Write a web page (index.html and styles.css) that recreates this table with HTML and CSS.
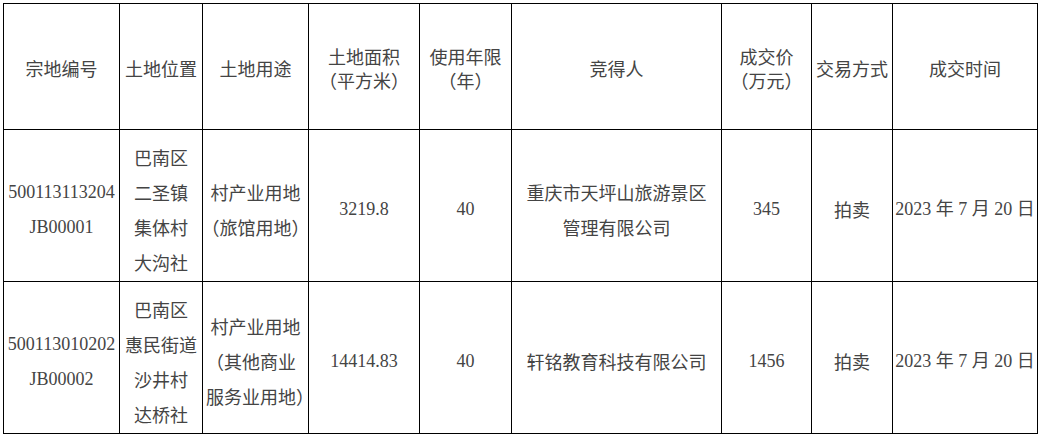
FILE: index.html
```html
<!DOCTYPE html>
<html lang="zh-CN">
<head>
<meta charset="utf-8">
<title>土地成交</title>
<link rel="stylesheet" href="styles.css">
</head>
<body>
<div class="page">
<table class="land">
  <colgroup>
    <col class="c1"><col class="c2"><col class="c3"><col class="c4"><col class="c5"><col class="c6"><col class="c7"><col class="c8"><col class="c9">
  </colgroup>
  <thead>
    <tr class="head">
      <th>宗地编号</th>
      <th>土地位置</th>
      <th>土地用途</th>
      <th>土地面积<br>（平方米）</th>
      <th>使用年限<br>（年）</th>
      <th>竞得人</th>
      <th>成交价<br>（万元）</th>
      <th>交易方式</th>
      <th>成交时间</th>
    </tr>
  </thead>
  <tbody>
    <tr class="row">
      <td class="num">500113113204<br>JB00001</td>
      <td>巴南区<br>二圣镇<br>集体村<br>大沟社</td>
      <td>村产业用地<br>（旅馆用地）</td>
      <td class="num">3219.8</td>
      <td class="num">40</td>
      <td>重庆市天坪山旅游景区<br>管理有限公司</td>
      <td class="num">345</td>
      <td>拍卖</td>
      <td class="date">2023 年 7 月 20 日</td>
    </tr>
    <tr class="row">
      <td class="num">500113010202<br>JB00002</td>
      <td>巴南区<br>惠民街道<br>沙井村<br>达桥社</td>
      <td>村产业用地<br>（其他商业<br>服务业用地）</td>
      <td class="num">14414.83</td>
      <td class="num">40</td>
      <td>轩铭教育科技有限公司</td>
      <td class="num">1456</td>
      <td>拍卖</td>
      <td class="date">2023 年 7 月 20 日</td>
    </tr>
  </tbody>
</table>
</div>
</body>
</html>
```
FILE: styles.css
```css
html, body {
  margin: 0;
  padding: 0;
  background: #ffffff;
}
.page {
  padding: 3px 0 0 3px;
}
.land {
  border-collapse: collapse;
  table-layout: fixed;
  width: 1035px;
  color: #444444;
  font-family: "Noto Sans CJK SC", "Liberation Serif", serif;
  font-size: 18px;
  font-feature-settings: "halt";
}
.c1 { width: 116px; }
.c2 { width: 83px; }
.c3 { width: 106px; }
.c4 { width: 111px; }
.c5 { width: 92px; }
.c6 { width: 210px; }
.c7 { width: 90px; }
.c8 { width: 81px; }
.c9 { width: 145px; }
.land th,
.land td {
  border: 1px solid #000;
  text-align: center;
  vertical-align: middle;
  white-space: nowrap;
  font-weight: 400;
  padding: 0;
  overflow: visible;
}
.head th {
  height: 122px;
  line-height: 24px;
  padding-top: 3px;
}
.row td {
  height: 143px;
  line-height: 35px;
  padding-top: 8px;
}
.land td.num {
  font-family: "Liberation Serif", "Noto Sans CJK SC", serif;
  font-size: 18px;
}
.land td.date {
  font-family: "Liberation Serif", "Noto Sans CJK SC", serif;
  font-size: 18px;
}
```
